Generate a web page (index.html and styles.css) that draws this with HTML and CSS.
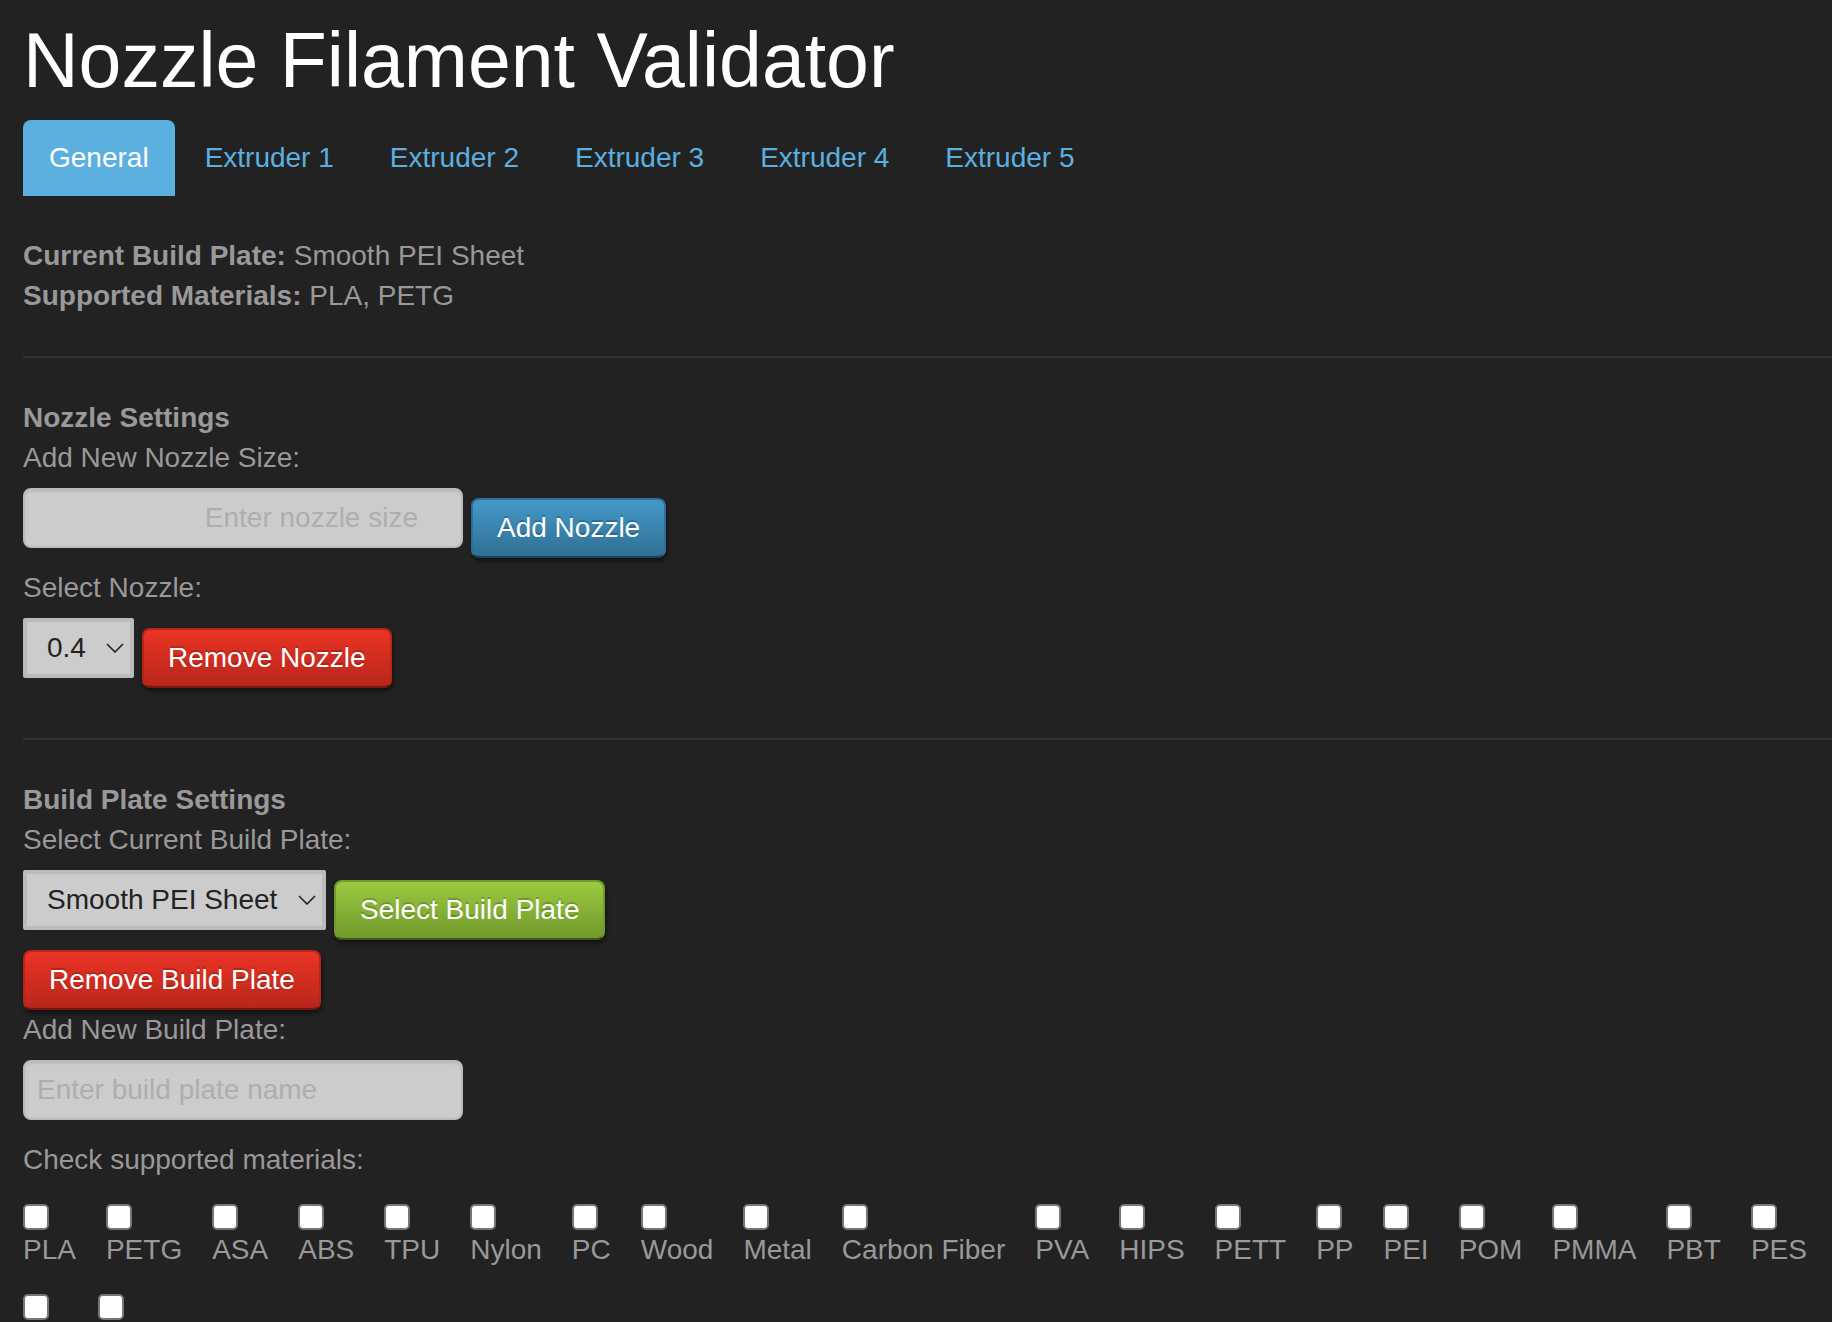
FILE: index.html
```html
<!DOCTYPE html>
<html lang="en">
<head>
<meta charset="utf-8">
<title>Nozzle Filament Validator</title>
<link rel="stylesheet" href="styles.css">
</head>
<body>
<main class="page">
  <h1 class="title">Nozzle Filament Validator</h1>
  <nav class="tabs">
    <a class="tab tab-active" href="#general">General</a>
    <a class="tab" href="#extruder1">Extruder 1</a>
    <a class="tab" href="#extruder2">Extruder 2</a>
    <a class="tab" href="#extruder3">Extruder 3</a>
    <a class="tab" href="#extruder4">Extruder 4</a>
    <a class="tab" href="#extruder5">Extruder 5</a>
  </nav>

  <section class="summary">
    <div><strong>Current Build Plate:</strong> Smooth PEI Sheet</div>
    <div><strong>Supported Materials:</strong> PLA, PETG</div>
  </section>
  <hr class="rule">

  <section>
    <strong class="heading">Nozzle Settings</strong>
    <label class="label" for="nozzle-size">Add New Nozzle Size:</label>
    <div class="row">
      <input class="field field-number" id="nozzle-size" type="number" placeholder="Enter nozzle size">
      <button class="btn btn-primary" type="button">Add Nozzle</button>
    </div>
    <label class="label" for="nozzle">Select Nozzle:</label>
    <div class="row">
      <select class="select" id="nozzle"><option>0.4</option></select>
      <button class="btn btn-danger" type="button">Remove Nozzle</button>
    </div>
  </section>
  <hr class="rule">

  <section>
    <strong class="heading">Build Plate Settings</strong>
    <label class="label" for="plate">Select Current Build Plate:</label>
    <div class="row">
      <select class="select" id="plate"><option>Smooth PEI Sheet</option></select>
      <button class="btn btn-success" type="button">Select Build Plate</button>
    </div>
    <button class="btn btn-danger" type="button">Remove Build Plate</button>
    <label class="label" for="plate-name">Add New Build Plate:</label>
    <div class="row">
      <input class="field" id="plate-name" type="text" placeholder="Enter build plate name">
    </div>
    <div>Check supported materials:</div>
    <div class="materials">
      <label class="material"><input class="check" type="checkbox">PLA</label>
      <label class="material"><input class="check" type="checkbox">PETG</label>
      <label class="material"><input class="check" type="checkbox">ASA</label>
      <label class="material"><input class="check" type="checkbox">ABS</label>
      <label class="material"><input class="check" type="checkbox">TPU</label>
      <label class="material"><input class="check" type="checkbox">Nylon</label>
      <label class="material"><input class="check" type="checkbox">PC</label>
      <label class="material"><input class="check" type="checkbox">Wood</label>
      <label class="material"><input class="check" type="checkbox">Metal</label>
      <label class="material"><input class="check" type="checkbox">Carbon Fiber</label>
      <label class="material"><input class="check" type="checkbox">PVA</label>
      <label class="material"><input class="check" type="checkbox">HIPS</label>
      <label class="material"><input class="check" type="checkbox">PETT</label>
      <label class="material"><input class="check" type="checkbox">PP</label>
      <label class="material"><input class="check" type="checkbox">PEI</label>
      <label class="material"><input class="check" type="checkbox">POM</label>
      <label class="material"><input class="check" type="checkbox">PMMA</label>
      <label class="material"><input class="check" type="checkbox">PBT</label>
      <label class="material"><input class="check" type="checkbox">PES</label>
      <label class="material"><input class="check" type="checkbox" aria-label="Custom material 1"></label>
      <label class="material"><input class="check" type="checkbox" aria-label="Custom material 2"></label>
    </div>
  </section>
</main>
</body>
</html>
```

FILE: styles.css
```css
* {
  box-sizing: border-box;
}

body {
  margin: 0;
  background: #222;
  color: #999;
  font: 28px/40px "Liberation Sans", Arial, Helvetica, sans-serif;
}

.page {
  padding: 20px 0 0 23px;
}

.title {
  margin: 0 0 20px;
  color: #fff;
  font-size: 77px;
  font-weight: 400;
  line-height: 80px;
}

.tabs {
  display: flex;
  gap: 4px;
  margin-bottom: 40px;
}

.tab {
  padding: 18px 26px;
  border-radius: 8px 8px 0 0;
  color: #5bb0e0;
  text-decoration: none;
}

.tab-active {
  background: #5bb0e0;
  color: #fff;
}

.rule {
  height: 2px;
  margin: 40px 0;
  border: 0;
  background: #333;
}

.heading,
.label {
  display: block;
}

.row {
  display: flex;
  gap: 8px;
  align-items: flex-start;
  padding: 10px 0;
}

.row .btn {
  margin-top: 10px;
}

.row .field {
  margin-bottom: 10px;
}

.field {
  width: 440px;
  height: 60px;
  padding: 0 12px;
  border: 2px solid #bbb;
  border-radius: 8px;
  background: #ccc;
  box-shadow: inset 0 2px 2px rgba(0, 0, 0, 0.07);
  color: #222;
  font: inherit;
}

.field::placeholder {
  color: #adafae;
  opacity: 1;
}

.field-number {
  padding-right: 28px;
  text-align: right;
}

.select {
  height: 60px;
  padding: 0 44px 0 20px;
  border: 4px solid #bbb;
  border-radius: 2px;
  appearance: none;
  background: #ccc url("data:image/svg+xml,%3Csvg xmlns='http://www.w3.org/2000/svg' width='18' height='10'%3E%3Cpath d='M1 1l8 8 8-8' fill='none' stroke='%23222' stroke-width='1.6'/%3E%3C/svg%3E") no-repeat right 6px center;
  color: #222;
  font: inherit;
}

.btn {
  display: block;
  height: 60px;
  padding: 0 24px;
  border: 2px solid;
  border-radius: 8px;
  box-shadow: 1px 3px 4px rgba(0, 0, 0, 0.5);
  color: #fff;
  font: inherit;
  text-shadow: 0 -2px 0 rgba(0, 0, 0, 0.2);
}

.btn-primary {
  border-color: #2e7099 #2e7099 #1a405a;
  background: linear-gradient(#4499ca, #2f6f94);
}

.btn-danger {
  border-color: #b8261a #b8261a #75170f;
  background: linear-gradient(#ea3425, #b8261b);
}

.btn-success {
  border-color: #71992b #71992b #3f5718;
  background: linear-gradient(#9aca3f, #71992c);
}

.materials {
  display: flex;
  flex-wrap: wrap;
  gap: 24px 30px;
  padding-top: 24px;
}

.material {
  display: flex;
  flex-direction: column;
}

.material:nth-child(n + 20) {
  width: 45px;
}

.check {
  width: 26px;
  height: 26px;
  margin: 0;
  border: 2px solid #767676;
  border-radius: 5px;
  appearance: none;
  background: #fff;
}

.check:checked {
  background: #5bb0e0;
}
```
